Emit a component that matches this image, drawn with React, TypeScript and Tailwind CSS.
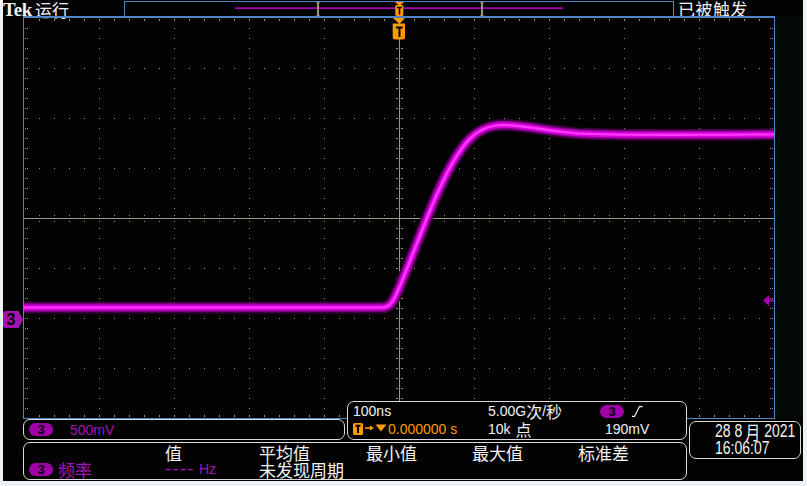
import React from "react";

const zh = "font-['Noto_Sans_CJK_SC',sans-serif]";
const TAN = "#9e9678";
const MAG = "#a414b4";

function Pill() {
  return (
    <span className="inline-flex h-[13px] w-[24px] shrink-0 items-center justify-center rounded-full bg-[#a000aa] text-[13px] font-bold leading-none text-black">
      3
    </span>
  );
}

function StatusBar() {
  return (
    <svg width="548" height="14" viewBox="125 2 548 14" className="block">
      <rect x="235" y="7.3" width="328" height="1.7" fill="#a800b4" />
      {[316.5, 480.5].map((x) => (
        <g key={x} fill="#9a9278">
          <rect x={x} y="2" width="3" height="1.5" />
          <rect x={x + 0.5} y="2" width="2" height="14" />
          <rect x={x} y="14.5" width="3" height="1.5" />
        </g>
      ))}
      <polygon points="395,2 404,2 399.5,6" fill="#ff9a00" />
      <rect x="395.3" y="5" width="8" height="11" rx="1.5" fill="#ff9a00" />
      <path d="M397 7.5h5M399.5 7.5v7" stroke="#000" strokeWidth="1.6" />
    </svg>
  );
}

function Graticule() {
  const xs = Array.from({ length: 49 }, (_, j) => 39 + 15 * j);
  const ys = Array.from({ length: 39 }, (_, j) => 28 + 10 * j);
  let d = "";
  for (const y of [68, 118, 168, 268, 318, 368])
    for (const x of xs) d += `M${x} ${y}h1v1h-1z`;
  for (const x of [99, 174, 249, 324, 474, 549, 624, 699])
    for (const y of ys) d += `M${x} ${y}h1v1h-1z`;
  for (const x of xs) d += `M${x} 19h1v2h-1zM${x} 415h1v2h-1z`;
  for (const y of ys)
    d += `M25 ${y}h1v1h-1zM27 ${y}h1v1h-1zM770 ${y}h1v1h-1zM772 ${y}h1v1h-1z`;
  for (const y of ys) d += `M396 ${y}h2v1h-2zM401 ${y}h2v1h-2z`;
  for (const x of xs) d += `M${x} 215h1v1h-1zM${x} 221h1v1h-1z`;

  const trace =
    "M24 307.5 L382 307.5 C389 307.5 392 303 395 297 C402 283 414 250 427 218 C439 188 451 161 466 143 C478 129 490 125 504 125 C524 125 546 131 578 133.5 C625 136 700 134.5 773 134.5";

  return (
    <svg width="752" height="403" viewBox="23 16 752 403" className="block shrink-0">
      <defs>
        <clipPath id="grid">
          <rect x="24" y="18" width="750" height="400" />
        </clipPath>
      </defs>
      <path d={d} fill={TAN} />
      <rect x="399" y="18" width="1" height="400" fill={TAN} />
      <rect x="24" y="218" width="750" height="1" fill={TAN} />
      <g clipPath="url(#grid)" fill="none" strokeLinecap="round" strokeLinejoin="round">
        <path d={trace} stroke="#3c003e" strokeWidth="12" />
        <path d={trace} stroke="#8e0096" strokeWidth="8.5" />
        <path d={trace} stroke="#dc00e0" strokeWidth="5.5" />
        <path d={trace} stroke="#ff3cff" strokeWidth="2.2" />
      </g>
      {/* borders */}
      <rect x="23" y="16" width="752" height="2" fill="#4f86c6" />
      <rect x="23" y="16" width="1" height="403" fill="#4f86c6" />
      <rect x="774" y="16" width="1" height="403" fill="#4f86c6" />
      <rect x="23" y="418" width="752" height="1" fill="#4f86c6" />
      {/* trigger position marker */}
      <polygon points="393,18 405,18 399.5,24" fill="#ff9a00" />
      <path d="M392.7 23.5h12.3v13.5a2.5 2.5 0 0 1-2.5 2.5h-7.3a2.5 2.5 0 0 1-2.5-2.5z" fill="#ff9a00" />
      <path d="M396 27.5h6.7M399.5 27.5v9.5" stroke="#000" strokeWidth="2" />
      {/* trigger level arrow */}
      <polygon points="763,300.5 769,295 769,306" fill="#a800b0" />
      <rect x="768" y="299.5" width="6" height="2" fill="#a800b0" />
    </svg>
  );
}

function ChannelMarker() {
  return (
    <svg width="20" height="18" viewBox="0 0 20 18" className="absolute left-0 top-[295px]">
      <path d="M2.5 0H15.5L20 8.5L15.5 17H2.5Q0 17 0 14.5V2.5Q0 0 2.5 0Z" fill="#a412ac" />
      <text
        x="8"
        y="14"
        fontSize="16"
        fontWeight="bold"
        textAnchor="middle"
        fill="#000"
        fontFamily="Liberation Sans, sans-serif"
      >
        3
      </text>
    </svg>
  );
}

function EdgeIcon() {
  return (
    <svg width="11" height="11" viewBox="0 0 11 11" className="ml-[8px]">
      <polyline points="0,10.4 2.5,10.4 7.5,0.6 10.5,0.6" fill="none" stroke="#f2f2f2" strokeWidth="1.2" />
    </svg>
  );
}

function TrigIcon() {
  return (
    <svg width="34" height="12" viewBox="0 0 34 12" className="shrink-0">
      <rect x="0" y="0" width="10" height="12" rx="1.5" fill="#ff9a00" />
      <path d="M2.5 2.8h5M5 2.8v7.2" stroke="#000" strokeWidth="2" />
      <path d="M12 5h6" stroke="#ff9a00" strokeWidth="1.6" />
      <polygon points="17,2.5 21,5 17,7.5" fill="#ff9a00" />
      <polygon points="22.5,1.5 33.5,1.5 28,8.5" fill="#ff9a00" />
    </svg>
  );
}

export default function App() {
  return (
    <div className="h-[486px] w-[807px] bg-[#eef2f8] pl-[3px] font-['Liberation_Sans','Noto_Sans_CJK_SC',sans-serif]">
      <div className="flex h-[481px] w-[800px] flex-col overflow-hidden bg-[#020202] text-[#f2f2f2]">
        {/* Top status row */}
        <div className="flex h-[16px] items-start">
          <div className="flex w-[121px] items-start">
            <span className="font-['Liberation_Serif',serif] text-[19px] font-bold leading-[19px] tracking-[-0.3px]">
              Tek
            </span>
            <span className={`${zh} ml-[3px] mt-[1px] text-[17px] leading-[18px]`}>运行</span>
          </div>
          <div className="mt-[1px] h-[15px] w-[550px] border-x border-t border-[#4f86c6]">
            <StatusBar />
          </div>
          <span className={`${zh} ml-[4px] text-[17px] leading-[17px] tracking-[0.5px]`}>已被触发</span>
        </div>

        {/* Graticule */}
        <div className="flex h-[403px]">
          <div className="relative w-[20px] shrink-0">
            <ChannelMarker />
          </div>
          <Graticule />
          <div className="flex-1 bg-[#020806]" />
        </div>

        {/* Readouts */}
        <div className="relative -mt-[18px] flex">
          <div className="ml-[20px] flex w-[664px] flex-col">
            <div className="flex h-[39px] items-end gap-[2px]">
              <div className="flex h-[21px] w-[322px] items-center rounded-[7px] border border-[#dcdcdc] bg-[#020202] pl-[5px]">
                <Pill />
                <span className="ml-[17px] text-[14px] leading-[18px]" style={{ color: MAG }}>
                  500mV
                </span>
              </div>
              <div className="h-[39px] w-[340px] rounded-[7px] border border-[#dcdcdc] bg-[#020202] pl-[5px] text-[14px] leading-[18px]">
                <div className="flex h-[18px] items-center">
                  <span className="w-[135px] shrink-0">100ns</span>
                  <span className="flex w-[112px] shrink-0 items-center">
                    5.00G<span className={`${zh} text-[16px] leading-[18px]`}>次</span>/<span className={`${zh} text-[16px] leading-[18px]`}>秒</span>
                  </span>
                  <span className="flex items-center">
                    <Pill />
                    <EdgeIcon />
                  </span>
                </div>
                <div className="flex h-[18px] items-center">
                  <span className="flex w-[135px] shrink-0 items-center text-[#ff9a00]">
                    <TrigIcon />
                    <span className="ml-[1px]">0.000000 s</span>
                  </span>
                  <span className="flex w-[112px] shrink-0 items-center">
                    10k<span className={`${zh} ml-[5px] text-[16px] leading-[18px]`}>点</span>
                  </span>
                  <span className="pl-[5px]">190mV</span>
                </div>
              </div>
            </div>
            <div className="mt-[2px] h-[38px] rounded-[7px] border border-[#dcdcdc] bg-[#020202] pl-[5px] pt-[1px] leading-[17px]">
              <div className={`${zh} flex h-[17px] items-center text-[17px] leading-[17px]`}>
                <span className="w-[136px] shrink-0" />
                <span className="w-[94px] shrink-0">值</span>
                <span className="w-[107px] shrink-0">平均值</span>
                <span className="w-[106px] shrink-0">最小值</span>
                <span className="w-[106px] shrink-0">最大值</span>
                <span>标准差</span>
              </div>
              <div className="flex h-[17px] items-center">
                <span className="flex w-[136px] shrink-0 items-center">
                  <Pill />
                  <span className={`${zh} ml-[5px] text-[17px] leading-[17px]`} style={{ color: MAG }}>
                    频率
                  </span>
                </span>
                <span className="flex w-[94px] shrink-0 items-center text-[14px]" style={{ color: MAG }}>
                  <span className="text-[18px] leading-[17px] tracking-[1.5px]">----</span>
                  <span className="ml-[4px]">Hz</span>
                </span>
                <span className={`${zh} text-[17px] leading-[17px]`}>未发现周期</span>
              </div>
            </div>
          </div>
          <div className="ml-[2px] mt-[20px] h-[38px] w-[112px] rounded-[7px] border border-[#dcdcdc] bg-[#020202] pl-[25px] pt-[1px] text-[14px] leading-[17px]">
            <div className="flex h-[17px] origin-center scale-y-[1.25] items-center whitespace-pre">
              28 8<span className={`${zh} ml-[3px] text-[15px] leading-[17px]`}>月</span>
              <span className="ml-[4px]">2021</span>
            </div>
            <div className="flex h-[17px] origin-center scale-y-[1.25] items-center">16:06:07</div>
          </div>
        </div>
      </div>
    </div>
  );
}
